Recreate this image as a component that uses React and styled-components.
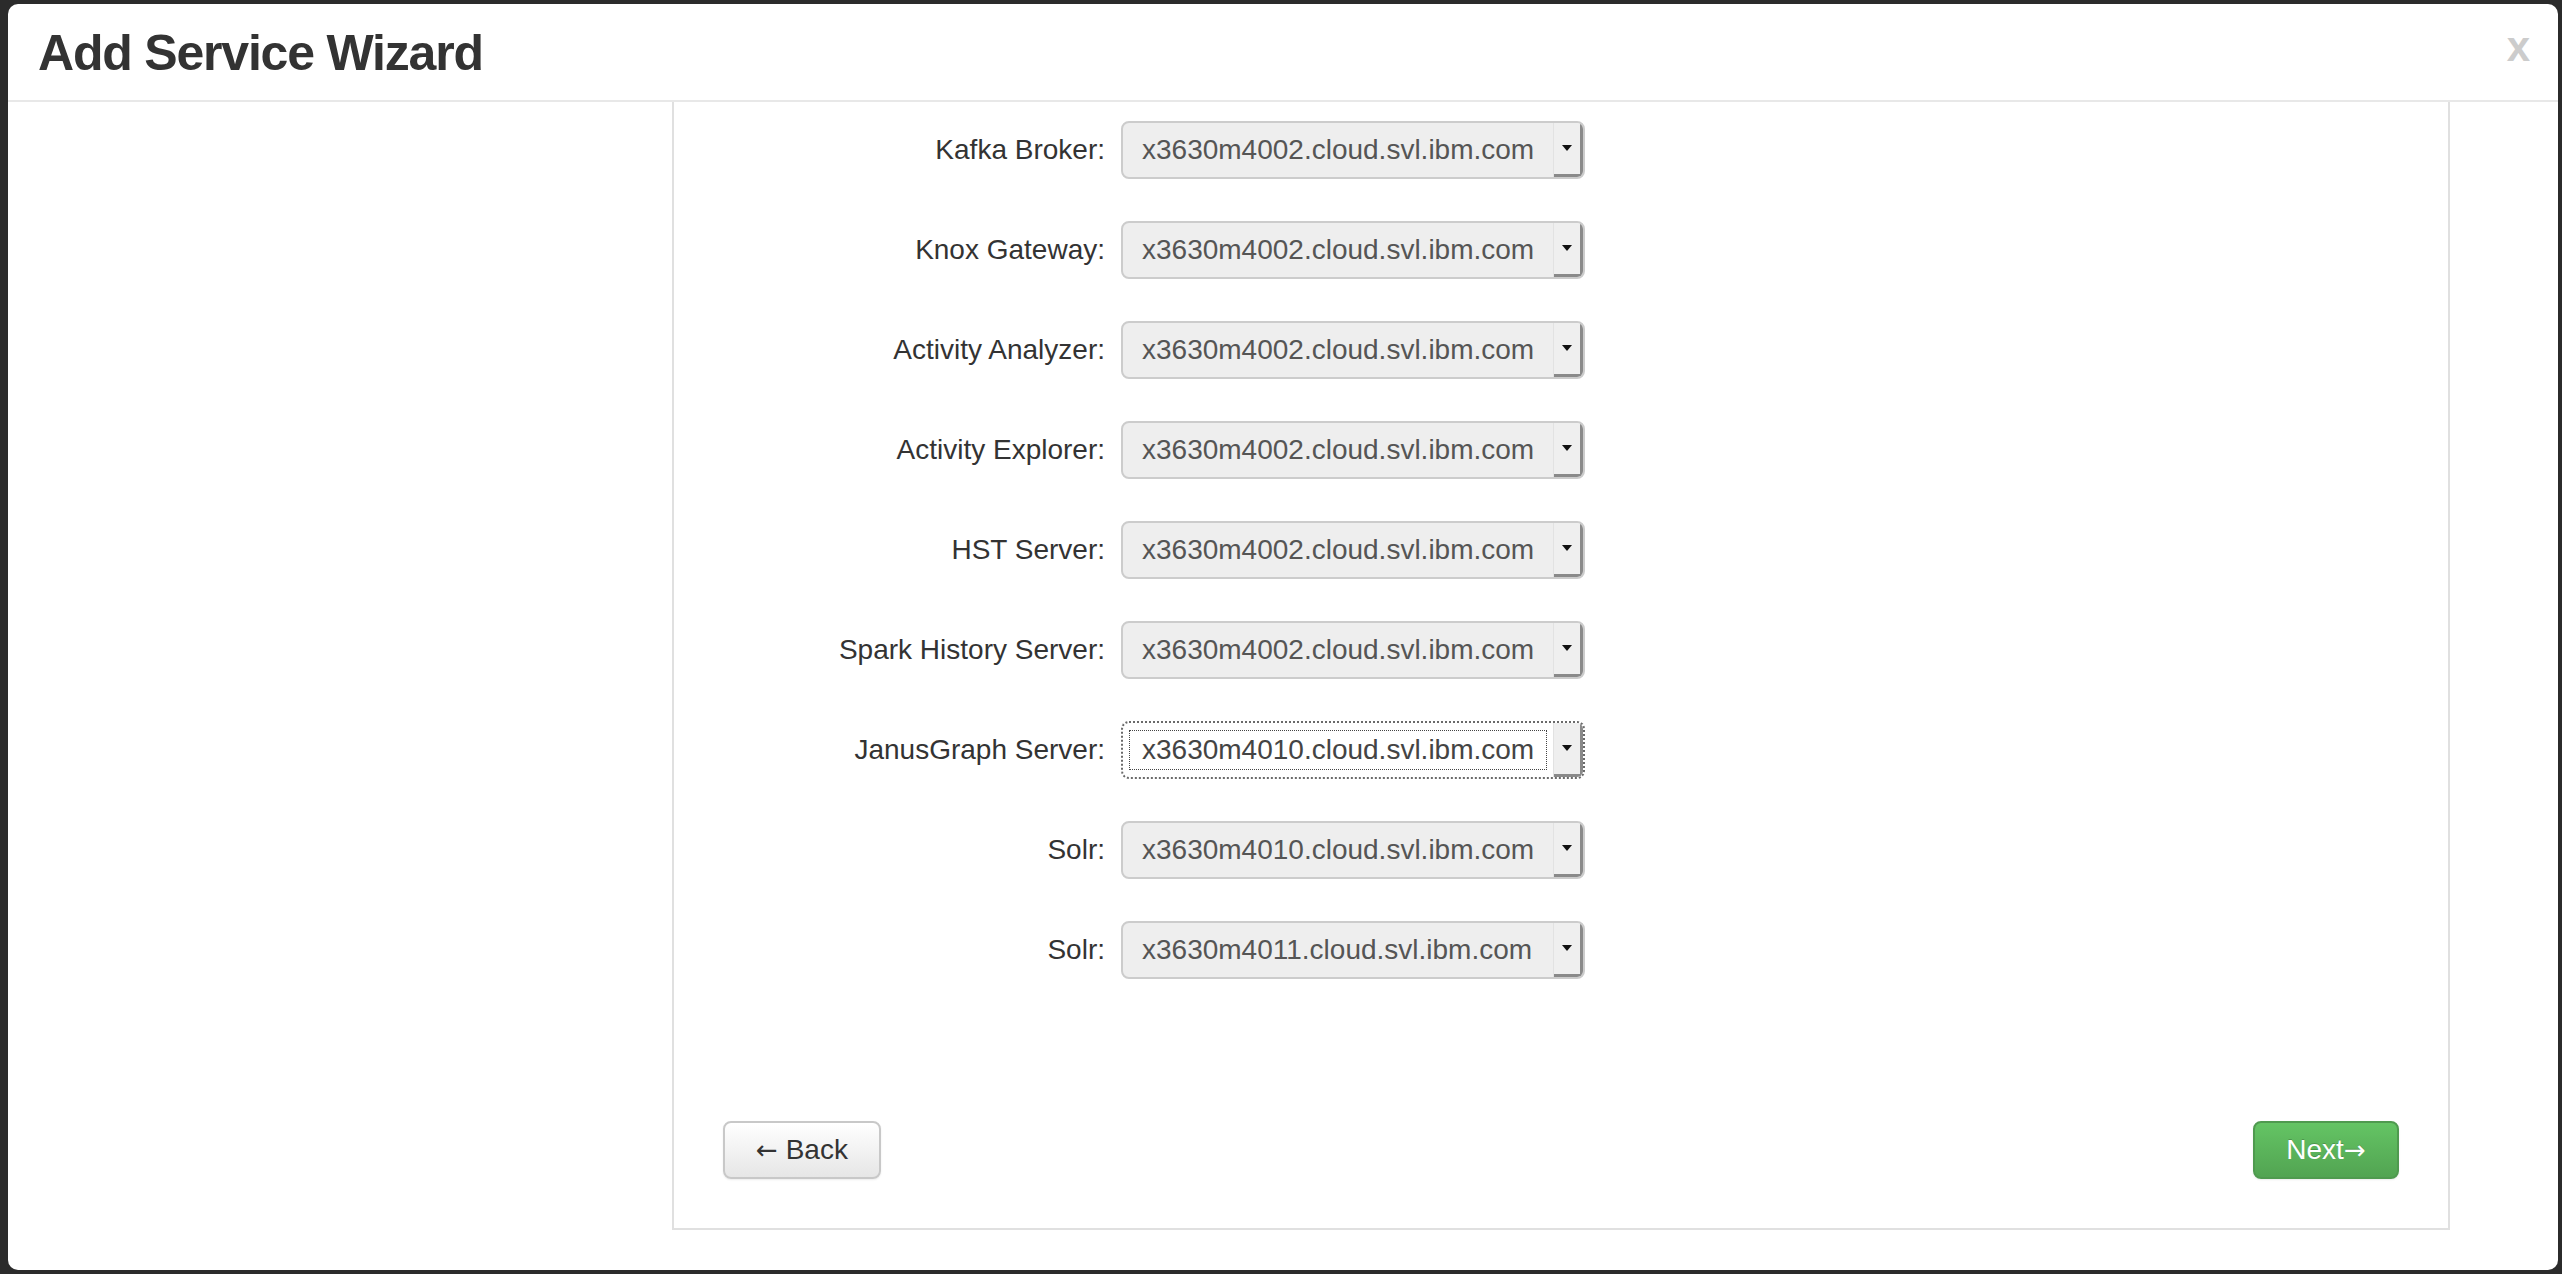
import React from "react";
import styled, { createGlobalStyle, css } from "styled-components";

const GlobalStyle = createGlobalStyle`
  html, body {
    margin: 0;
    padding: 0;
    background: #2b2b2b;
  }
  body {
    font-family: "Liberation Sans", Arial, Helvetica, sans-serif;
  }
`;

const Screen = styled.div`
  height: 1274px;
  box-sizing: border-box;
  padding: 4px 4px 4px 8px;
  display: flex;
`;

const Modal = styled.div`
  flex: 1;
  display: flex;
  flex-direction: column;
  background: #ffffff;
  border-radius: 10px;
  overflow: hidden;
`;

const Header = styled.div`
  height: 96px;
  box-sizing: content-box;
  padding: 0 28px 0 30px;
  border-bottom: 2px solid #e8e8e8;
  display: flex;
  justify-content: space-between;
  align-items: flex-start;
`;

const Title = styled.h3`
  margin: 22px 0 0;
  font-size: 50px;
  line-height: 55px;
  font-weight: bold;
  letter-spacing: -1.2px;
  color: #333333;
`;

const Close = styled.span`
  margin-top: 22px;
  font-size: 42px;
  line-height: 42px;
  font-weight: bold;
  color: #cccccc;
`;

const Body = styled.div`
  flex: 1;
  padding: 0 108px 0 664px;
`;

const Panel = styled.div`
  border: 2px solid #e0e0e0;
  border-top: none;
  padding: 0 49px 49px;
`;

const Rows = styled.div`
  padding-top: 19px;
  display: flex;
  flex-direction: column;
  gap: 42px;
`;

const Row = styled.div`
  display: flex;
  align-items: center;
  gap: 16px;
  height: 58px;
`;

const Label = styled.label`
  width: 382px;
  text-align: right;
  font-size: 28px;
  color: #333333;
`;

const Select = styled.div`
  width: 464px;
  height: 58px;
  box-sizing: border-box;
  display: flex;
  border: 2px solid #cccccc;
  border-radius: 8px;
  background: #eeeeee;
  overflow: hidden;
  ${(p) =>
    p.$focused &&
    css`
      border: 2px dotted #6a6a6a;
      background: #ffffff;
    `}
`;

const Value = styled.div`
  flex: 1;
  display: flex;
  align-items: center;
  padding: 0 6px;
`;

const ValueText = styled.span`
  flex: 1;
  box-sizing: border-box;
  height: 40px;
  display: flex;
  align-items: center;
  padding: 0 6px 0 12px;
  border: 1px solid transparent;
  font-size: 28px;
  color: #555555;
  ${(p) =>
    p.$focused &&
    css`
      border: 1px dotted #444444;
      color: #444444;
    `}
`;

const ArrowCell = styled.div`
  width: 26px;
  display: flex;
  align-items: center;
  justify-content: center;
  background: #efefef;
  border-left: 1px solid #e2e2e2;
  box-shadow: inset -3px -3px 0 #8a8a8a;
  padding-right: 3px;
  padding-bottom: 4px;
`;

const Buttons = styled.div`
  margin-top: 142px;
  display: flex;
  justify-content: space-between;
`;

const Button = styled.button`
  width: ${(p) => p.$width}px;
  height: 58px;
  box-sizing: border-box;
  padding: 0;
  font-family: "Liberation Sans", Arial, Helvetica, sans-serif;
  font-size: 28px;
  border-radius: 8px;
  cursor: pointer;
  color: #333333;
  border: 2px solid #c8c8c8;
  background: linear-gradient(#ffffff, #e6e6e6);
  box-shadow: 0 1px 2px rgba(0, 0, 0, 0.08);
  ${(p) =>
    p.$primary &&
    css`
      color: #ffffff;
      border-color: #4f9a4f;
      background: linear-gradient(#64c464, #52a452);
      text-shadow: 0 -1px 0 rgba(0, 0, 0, 0.2);
    `}
`;

const Arrow = styled.span`
  font-family: "DejaVu Sans", sans-serif;
  font-size: 26px;
`;

const hosts = [
  ["Kafka Broker:", "x3630m4002.cloud.svl.ibm.com"],
  ["Knox Gateway:", "x3630m4002.cloud.svl.ibm.com"],
  ["Activity Analyzer:", "x3630m4002.cloud.svl.ibm.com"],
  ["Activity Explorer:", "x3630m4002.cloud.svl.ibm.com"],
  ["HST Server:", "x3630m4002.cloud.svl.ibm.com"],
  ["Spark History Server:", "x3630m4002.cloud.svl.ibm.com"],
  ["JanusGraph Server:", "x3630m4010.cloud.svl.ibm.com", true],
  ["Solr:", "x3630m4010.cloud.svl.ibm.com"],
  ["Solr:", "x3630m4011.cloud.svl.ibm.com"],
];

function HostSelect({ value, focused }) {
  return (
    <Select $focused={focused}>
      <Value>
        <ValueText $focused={focused}>{value}</ValueText>
      </Value>
      <ArrowCell>
        <svg width="10" height="6" viewBox="0 0 10 6">
          <polygon points="0,0 10,0 5,6" fill="#111" />
        </svg>
      </ArrowCell>
    </Select>
  );
}

export default function App() {
  return (
    <>
      <GlobalStyle />
      <Screen>
        <Modal>
          <Header>
            <Title>Add Service Wizard</Title>
            <Close>x</Close>
          </Header>
          <Body>
            <Panel>
              <Rows>
                {hosts.map(([label, value, focused], i) => (
                  <Row key={i}>
                    <Label>{label}</Label>
                    <HostSelect value={value} focused={focused} />
                  </Row>
                ))}
              </Rows>
              <Buttons>
                <Button $width={158}>
                  <Arrow>←</Arrow> Back
                </Button>
                <Button $primary $width={146}>
                  Next<Arrow>→</Arrow>
                </Button>
              </Buttons>
            </Panel>
          </Body>
        </Modal>
      </Screen>
    </>
  );
}
